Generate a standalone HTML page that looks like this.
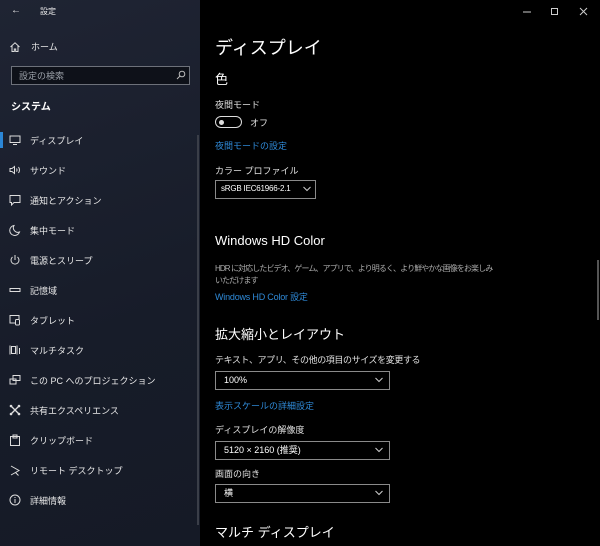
<!DOCTYPE html>
<html><head><meta charset="utf-8"><style>
*{margin:0;padding:0;box-sizing:border-box}
body{width:600px;height:546px;background:#000;color:#fff;font-family:"Liberation Sans","Noto Sans CJK JP",sans-serif;position:relative;overflow:hidden}
.side{position:absolute;left:0;top:0;width:200px;height:546px;background:linear-gradient(160deg,#1f2433,#171c29 60%,#151a26)}
.a{position:absolute;white-space:nowrap}
.s{font-size:9px;color:#e8e8e8}
.it{position:absolute;left:30px;font-size:9px;color:#e8e8e8}
.ic{position:absolute;left:9px;width:12px;height:12px}
.lbl{font-size:9px;color:#e0e0e0}
.lnk{font-size:9px;color:#2f8ad8}
.dd{position:absolute;border:1.5px solid #8a8a8a;height:19px;font-size:9px;padding-left:8px;line-height:16px;color:#fff}
.dd svg{position:absolute;right:6px;top:5px}
</style></head><body>
<div class="side">
<div class="a s" style="left:11px;top:5px;font-size:10px">←</div>
<div class="a s" style="left:40px;top:6px;font-size:8px">設定</div>
<svg class="ic" style="top:41px" viewBox="0 0 12 12"><path d="M1.5 6L6 1.8 10.5 6M3 5v5.5h2.3V8h1.4v2.5H9V5" fill="none" stroke="#ddd" stroke-width="1"/></svg>
<div class="a s" style="left:31px;top:40px">ホーム</div>
<div class="a" style="left:11px;top:66px;width:179px;height:19px;border:1px solid #6d717a;background:#0e1119"></div>
<div class="a" style="left:19px;top:69px;font-size:9px;color:#9aa0a8">設定の検索</div>
<svg class="a" style="left:176px;top:70px" width="10" height="10" viewBox="0 0 10 10"><circle cx="6" cy="4" r="2.8" fill="none" stroke="#bbb"/><path d="M4 6L1 9" stroke="#bbb"/></svg>
<div class="a" style="left:11px;top:98px;font-size:10px;font-weight:bold">システム</div>
<div class="a" style="left:0;top:132px;width:3px;height:16px;background:#2b86d6"></div>
<svg class="ic" style="top:134px" viewBox="0 0 12 12"><rect x="1" y="2" width="10" height="6.5" fill="none" stroke="#ddd"/><path d="M4 10.5h4" stroke="#ddd"/></svg>
<div class="it" style="top:134px">ディスプレイ</div>
<svg class="ic" style="top:164px" viewBox="0 0 12 12"><path d="M1 4.5h2l2.5-2v7L3 7.5H1z M7.5 4.5q1 1.5 0 3M9.5 3q2 3 0 6" fill="none" stroke="#ddd"/></svg>
<div class="it" style="top:164px">サウンド</div>
<svg class="ic" style="top:194px" viewBox="0 0 12 12"><path d="M1 1.5h10v7H5L2.5 11V8.5H1z" fill="none" stroke="#ddd"/></svg>
<div class="it" style="top:194px">通知とアクション</div>
<svg class="ic" style="top:224px" viewBox="0 0 12 12"><path d="M5 1.5A5 5 0 1 0 10.5 8 4.5 4.5 0 0 1 5 1.5z" fill="none" stroke="#ddd"/></svg>
<div class="it" style="top:224px">集中モード</div>
<svg class="ic" style="top:254px" viewBox="0 0 12 12"><path d="M3.5 3A4 4 0 1 0 8.5 3M6 1v5" fill="none" stroke="#ddd"/></svg>
<div class="it" style="top:254px">電源とスリープ</div>
<svg class="ic" style="top:284px" viewBox="0 0 12 12"><rect x="1" y="4.5" width="10" height="3" fill="none" stroke="#ddd"/></svg>
<div class="it" style="top:284px">記憶域</div>
<svg class="ic" style="top:314px" viewBox="0 0 12 12"><path d="M6 9H1V1.5h9V5" fill="none" stroke="#ddd"/><rect x="6.5" y="5.5" width="4" height="5.5" rx="1" fill="none" stroke="#ddd"/></svg>
<div class="it" style="top:314px">タブレット</div>
<svg class="ic" style="top:344px" viewBox="0 0 12 12"><path d="M1 1.5v9M8 1.5v9M2.5 2.5h4v7h-4zM10.5 4v6" fill="none" stroke="#ddd"/></svg>
<div class="it" style="top:344px">マルチタスク</div>
<svg class="ic" style="top:374px" viewBox="0 0 12 12"><rect x="4" y="1.5" width="7" height="5" fill="none" stroke="#ddd"/><rect x="1" y="5" width="6" height="5" fill="none" stroke="#ddd"/></svg>
<div class="it" style="top:374px">この PC へのプロジェクション</div>
<svg class="ic" style="top:404px" viewBox="0 0 12 12"><path d="M2 2l8 8M10 2l-8 8" stroke="#ddd" stroke-width="1.3"/><circle cx="2" cy="2" r="1.3" fill="#ddd"/><circle cx="10" cy="2" r="1.3" fill="#ddd"/><circle cx="2" cy="10" r="1.3" fill="#ddd"/><circle cx="10" cy="10" r="1.3" fill="#ddd"/></svg>
<div class="it" style="top:404px">共有エクスペリエンス</div>
<svg class="ic" style="top:434px" viewBox="0 0 12 12"><path d="M1.5 2.5h9v9h-9zM4 1h4v3H4z" fill="none" stroke="#ddd"/></svg>
<div class="it" style="top:434px">クリップボード</div>
<svg class="ic" style="top:464px" viewBox="0 0 12 12"><path d="M2 2l8 4.5L2 11M6.5 8.5l3 3" fill="none" stroke="#ddd"/></svg>
<div class="it" style="top:464px">リモート デスクトップ</div>
<svg class="ic" style="top:494px" viewBox="0 0 12 12"><circle cx="6" cy="6" r="5" fill="none" stroke="#ddd"/><path d="M6 5v4M6 3v1" stroke="#ddd"/></svg>
<div class="it" style="top:494px">詳細情報</div>
<div class="a" style="left:197px;top:135px;width:2px;height:390px;background:#3a3e48"></div>
</div>
<svg class="a" style="left:520px;top:5px" width="75" height="14" viewBox="0 0 75 14"><path d="M3 7h8" stroke="#ccc"/><rect x="31.5" y="3.5" width="6" height="6" fill="none" stroke="#ccc"/><path d="M60 3l7 7M67 3l-7 7" stroke="#ccc"/></svg>
<div class="a" style="left:597px;top:260px;width:2px;height:60px;background:#555"></div>
<div class="a" style="left:215px;top:34px;font-size:18px">ディスプレイ</div>
<div class="a" style="left:215px;top:69px;font-size:13px">色</div>
<div class="a lbl" style="left:215px;top:98px">夜間モード</div>
<div class="a" style="left:215px;top:116px;width:27px;height:12px;border:1.5px solid #ddd;border-radius:6px"></div>
<div class="a" style="left:219px;top:119.5px;width:5px;height:5px;border-radius:50%;background:#ddd"></div>
<div class="a lbl" style="left:250px;top:116px">オフ</div>
<div class="a lnk" style="left:215px;top:139px">夜間モードの設定</div>
<div class="a lbl" style="left:215px;top:164px">カラー プロファイル</div>
<div class="dd" style="left:215px;top:180px;width:101px;font-size:8px;padding-left:5px;letter-spacing:-0.2px">sRGB IEC61966-2.1<svg width="8" height="6" viewBox="0 0 8 6" style="right:4px"><path d="M0.5 1l3.5 3.5L7.5 1" fill="none" stroke="#ccc"/></svg></div>
<div class="a" style="left:215px;top:233px;font-size:13px">Windows HD Color</div>
<div class="a" style="left:215px;top:263px;font-size:8px;color:#aaa;line-height:12px;letter-spacing:-0.9px">HDR に対応したビデオ、ゲーム、アプリで、より明るく、より鮮やかな画像をお楽しみ<br>いただけます</div>
<div class="a lnk" style="left:215px;top:290px;letter-spacing:-0.2px">Windows HD Color 設定</div>
<div class="a" style="left:215px;top:324px;font-size:13px">拡大縮小とレイアウト</div>
<div class="a lbl" style="left:215px;top:353px;letter-spacing:-0.4px">テキスト、アプリ、その他の項目のサイズを変更する</div>
<div class="dd" style="left:215px;top:371px;width:175px">100%<svg width="8" height="6" viewBox="0 0 8 6"><path d="M0.5 1l3.5 3.5L7.5 1" fill="none" stroke="#ccc"/></svg></div>
<div class="a lnk" style="left:215px;top:399px">表示スケールの詳細設定</div>
<div class="a lbl" style="left:215px;top:423px">ディスプレイの解像度</div>
<div class="dd" style="left:215px;top:441px;width:175px">5120 × 2160 (推奨)<svg width="8" height="6" viewBox="0 0 8 6"><path d="M0.5 1l3.5 3.5L7.5 1" fill="none" stroke="#ccc"/></svg></div>
<div class="a lbl" style="left:215px;top:467px">画面の向き</div>
<div class="dd" style="left:215px;top:484px;width:175px">横<svg width="8" height="6" viewBox="0 0 8 6"><path d="M0.5 1l3.5 3.5L7.5 1" fill="none" stroke="#ccc"/></svg></div>
<div class="a" style="left:215px;top:522px;font-size:13px">マルチ ディスプレイ</div>
</body></html>
